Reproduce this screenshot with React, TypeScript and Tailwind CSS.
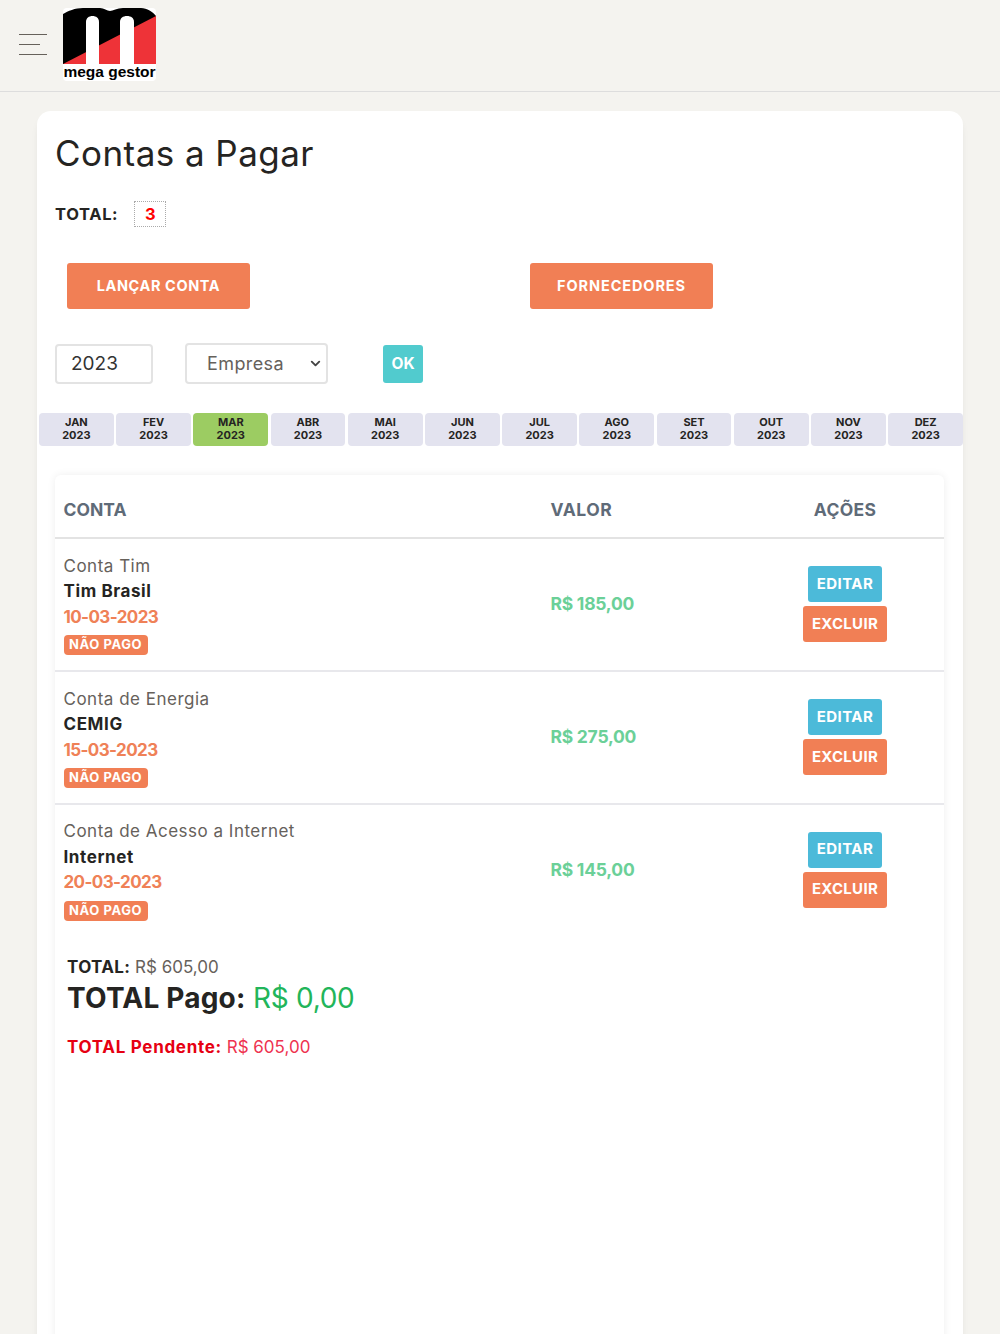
import { ChevronDown } from "lucide-react";

const months = ["JAN", "FEV", "MAR", "ABR", "MAI", "JUN", "JUL", "AGO", "SET", "OUT", "NOV", "DEZ"];

const contas = [
  { nome: "Conta Tim", empresa: "Tim Brasil", data: "10-03-2023", valor: "R$ 185,00" },
  { nome: "Conta de Energia", empresa: "CEMIG", data: "15-03-2023", valor: "R$ 275,00" },
  { nome: "Conta de Acesso a Internet", empresa: "Internet", data: "20-03-2023", valor: "R$ 145,00" },
];

function Logo() {
  return (
    <div className="flex h-[73px] w-[93px] flex-col rounded-[4px] bg-white">
      <svg width="93" height="57" viewBox="0 0 93 57">
        <path d="M0 56V6C5 3 12 0 20 0H37C41 0 44 3 47 3C50 3 54 0 60 0H78C84 0 90 4 93 8V56Z" fill="#000" />
        <path d="M0 56L93 8V56Z" fill="#ee3338" />
        <path d="M23 56V14C23 10 26 8 29.5 8C33 8 36 10 36 14V56Z" fill="#fff" />
        <path d="M57 56V14C57 10 60 8 64 8C68 8 71 10 71 14V56Z" fill="#fff" />
      </svg>
      <span className="text-center font-['Liberation_Sans',sans-serif] text-[15.5px] leading-[14px] font-bold text-black">
        mega gestor
      </span>
    </div>
  );
}

export default function App() {
  return (
    <div className="h-[1334px] overflow-hidden bg-[#f4f3ef] font-['Inter',sans-serif] text-[#252422]">
      <header className="flex h-[92px] items-start border-b border-[#dddddd] pt-2 pl-[19px]">
        <div className="mt-[26px] flex w-[28px] flex-col gap-[9px]">
          <span className="h-px w-full bg-[#66615b]" />
          <span className="h-px w-[21px] bg-[#66615b]" />
          <span className="h-px w-full bg-[#66615b]" />
        </div>
        <div className="ml-4">
          <Logo />
        </div>
      </header>

      <main className="mx-[37px] mt-[19px] h-[1300px] rounded-[14px] bg-white px-[18px] pt-[18px] shadow-[0_6px_10px_-4px_rgba(0,0,0,0.15)]">
        <h1 className="text-[35px] leading-[48px] font-normal tracking-[0.45px] text-[#252422]">Contas a Pagar</h1>

        <div className="mt-[24px] flex h-[26px] items-center">
          <span className="text-[16.5px] font-bold tracking-[0.65px]">TOTAL:</span>
          <span className="ml-4 flex h-[26px] w-[32px] items-center justify-center border border-dotted border-[#aaaaaa] text-[16.5px] font-bold text-[#ff0000]">
            3
          </span>
        </div>

        <div className="mt-[36px] ml-3 flex gap-[280px]">
          <button className="h-[46px] w-[183px] rounded-[3px] bg-[#f17f55] text-[14.5px] font-bold tracking-[0.6px] text-white">
            LANÇAR CONTA
          </button>
          <button className="h-[46px] w-[183px] rounded-[3px] bg-[#f17f55] text-[14.5px] font-bold tracking-[0.9px] text-white">
            FORNECEDORES
          </button>
        </div>

        <div className="mt-[34px] flex items-center">
          <input
            readOnly
            value="2023"
            className="h-[40px] w-[98px] rounded-[4px] border-2 border-[#e3e3e3] pl-[14px] text-[19px] text-[#333333] outline-none"
          />
          <div className="relative ml-[32px]">
            <select className="h-[41px] w-[143px] appearance-none rounded-[4px] border-2 border-[#e3e3e3] bg-white pl-[20px] text-[18px] tracking-[0.4px] text-[#66615b] outline-none">
              <option>Empresa</option>
            </select>
            <ChevronDown size={15} strokeWidth={3} className="absolute top-[13px] right-[5px] text-[#444444]" />
          </div>
          <button className="ml-[55px] h-[38px] w-[40px] rounded-[3px] bg-[#51cbce] text-[15.5px] font-bold text-white">OK</button>
        </div>

        <div className="mt-[29px] mr-[-18px] ml-[-16px] grid grid-cols-12 gap-[2.5px]">
          {months.map(m => (
            <div
              key={m}
              className={`flex h-[33px] flex-col items-center justify-center rounded-[4px] pb-[1px] text-[11px] leading-[13px] font-bold text-[#252422] ${
                m === "MAR" ? "bg-[#9ccc62]" : "bg-[#e3e3ef]"
              }`}
            >
              <span>{m}</span>
              <span>2023</span>
            </div>
          ))}
        </div>

        <section className="mt-[29px] mr-[1px] h-[900px] rounded-[6px] bg-white shadow-[0_0_8px_rgba(0,0,0,0.07)]">
          <div className="grid h-[64px] grid-cols-[488px_203px_198px] items-center border-b-2 border-[#e3e3e3] pt-[8px] text-[17.5px] font-bold text-[#5f6b78]">
            <span className="pl-[8.5px]">CONTA</span>
            <span className="pl-[7.5px] tracking-[0.5px]">VALOR</span>
            <span className="text-center tracking-[0.3px]">AÇÕES</span>
          </div>

          {contas.map((c, i) => (
            <div
              key={c.nome}
              className={`grid grid-cols-[488px_203px_198px] items-center border-b-2 ${i < 2 ? "h-[133px] border-[#e8e8ec]" : "h-[132px] border-transparent"}`}
            >
              <div className="pl-[8.5px]">
                <div className="text-[17px] leading-[25.5px] tracking-[0.5px] text-[#66615b]">{c.nome}</div>
                <div className="text-[17px] leading-[25.5px] font-bold tracking-[0.6px] text-[#252422]">{c.empresa}</div>
                <div className="text-[17px] leading-[25.5px] font-bold tracking-[-0.6px] text-[#ef8157]">{c.data}</div>
                <span className="mt-[5px] block h-[20px] w-[84px] rounded-[4px] bg-[#f17f55] text-center text-[13px] leading-[19px] font-bold tracking-[0.6px] text-white">
                  NÃO PAGO
                </span>
              </div>
              <div className="pl-[7.5px] text-[17.5px] font-bold tracking-[-0.25px] text-[#6bd098]">{c.valor}</div>
              <div className="mb-[1px] flex flex-col items-center gap-[4px]">
                <button className="h-[36px] w-[74px] rounded-[3px] bg-[#4cbad9] text-[15px] font-bold tracking-[0.4px] text-white">EDITAR</button>
                <button className="h-[36px] w-[84px] rounded-[3px] bg-[#f17f55] text-[15px] font-bold tracking-[0.3px] text-white">EXCLUIR</button>
              </div>
            </div>
          ))}

          <div className="pt-[17px] pl-3">
            <p className="text-[17px] leading-[26px] text-[#66615b]">
              <b className="tracking-[0.35px] text-[#252422]">TOTAL:</b> R$ 605,00
            </p>
            <p className="text-[28px] leading-[36px] tracking-[-0.3px] text-[#22b55a]">
              <b className="tracking-[0.2px] text-[#252422]">TOTAL Pago:</b> R$ 0,00
            </p>
            <p className="mt-[18px] text-[17px] leading-[26px] text-[#ee3350]">
              <b className="tracking-[0.7px] text-[#e60012]">TOTAL Pendente:</b> R$ 605,00
            </p>
          </div>
        </section>
      </main>
    </div>
  );
}
